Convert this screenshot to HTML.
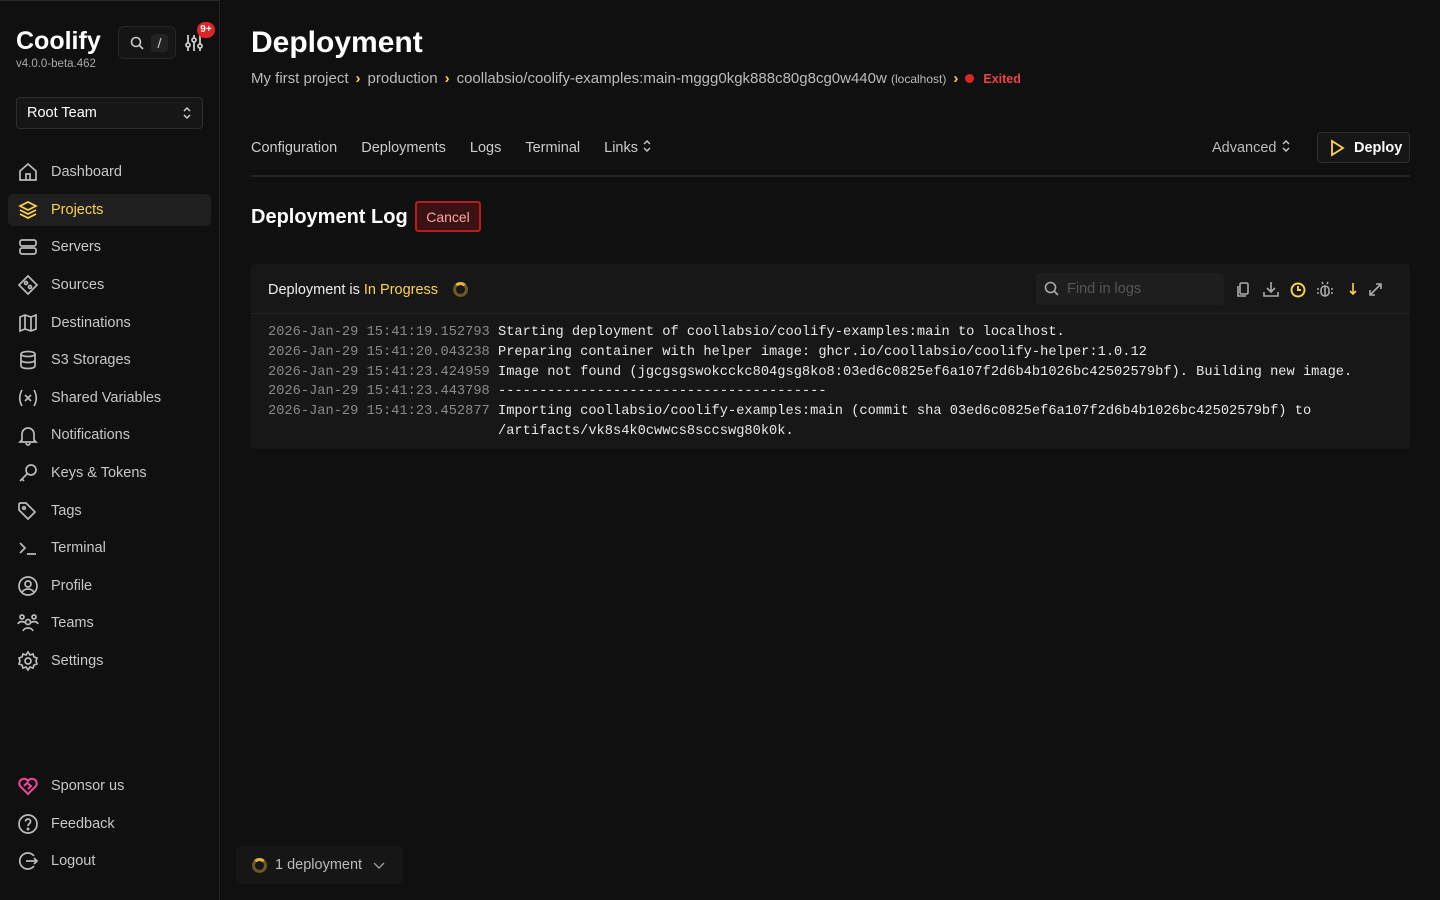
<!DOCTYPE html>
<html><head><meta charset="utf-8"><style>
*{box-sizing:border-box;margin:0;padding:0}
body{width:1440px;height:900px;background:#101010;font-family:"Liberation Sans",sans-serif;color:#ddd;position:relative;overflow:hidden}
.side{position:absolute;left:0;top:0;width:220px;height:900px;border-right:1px solid #242424;border-top:1px solid #2a2a2a}
.logo{position:absolute;left:16px;top:26px;font-size:25px;font-weight:bold;color:#fff}
.ver{position:absolute;left:16px;top:57px;font-size:11.5px;color:#aaa}
.srch{position:absolute;left:118px;top:25px;width:58px;height:33px;border:1px solid #262626;border-radius:6px;background:#151515}
.badge{position:absolute;left:197px;top:21px;width:18px;height:16px;border-radius:8px;background:#dc2626;color:#fff;font-size:10px;font-weight:bold;text-align:center;line-height:16px}
.team{position:absolute;left:16px;top:96px;width:187px;height:32px;border:1px solid #2e2e2e;border-radius:4px;background:#161616;font-size:14.5px;color:#fff;padding:7px 10px}
.nav{position:absolute;left:8px;width:203px;height:32px;border-radius:5px;font-size:14.5px;color:#c8c8c8;padding-left:43px;line-height:33px}
.nav svg{position:absolute;left:9px;top:5px}
.nav.act{background:#1f1f1f;color:#fcd34d}
.main{position:absolute;left:251px;top:0;right:30px}
h1{position:absolute;top:26px;font-size:30px;color:#fff;font-weight:bold}
.bc{position:absolute;top:70px;font-size:15px;color:#bbb;white-space:nowrap}
.bc .ch{color:#fcd34d;margin:0 7px;font-weight:bold}
.tabs{position:absolute;top:140px;font-size:14.5px;color:#ccc}
.tabs span{margin-right:24px}
.hr{position:absolute;left:251px;top:175px;width:1159px;height:2px;background:#222}
.btn{position:absolute;left:1317px;top:132px;width:93px;height:31px;border:1px solid #2e2e2e;border-radius:4px;background:#161616;font-size:14.5px;color:#fff;font-weight:bold;padding:7px 0 0 36px}
.box{position:absolute;left:251px;top:264px;width:1159px;height:185px;background:#171717;border-radius:4px}
.boxh{height:50px;border-bottom:1px solid #232323;position:relative}
.mono{font-family:"Liberation Mono",monospace;font-size:13.7px;line-height:19.8px;color:#e8e8e8;white-space:pre;position:absolute;left:17px;top:59px}
.ts{color:#8a8a8a}
</style></head><body>
<div class="side">
<div class="logo">Coolify</div><div class="ver">v4.0.0-beta.462</div>
<div class="srch"><svg width="58" height="33" style="position:absolute;left:0;top:0"><circle cx="17" cy="15" r="4.5" fill="none" stroke="#ccc" stroke-width="1.6"/><path d="M20.5 18.5l3.5 3.5" stroke="#ccc" stroke-width="1.6"/><rect x="32" y="7" width="17" height="18" rx="3" fill="#222"/><path d="M42 11l-3 10" stroke="#bbb" stroke-width="1.3"/></svg></div>
<svg width="20" height="20" style="position:absolute;left:184px;top:32px" stroke="#ccc" stroke-width="1.8" fill="none"><path d="M4 2v16M10 2v16M16 2v16"/><circle cx="4" cy="12" r="2" fill="#101010"/><circle cx="10" cy="7" r="2" fill="#101010"/><circle cx="16" cy="13" r="2" fill="#101010"/></svg>
<div class="badge">9+</div>
<div class="team">Root Team<svg width="10" height="14" style="position:absolute;right:10px;top:8px" stroke="#ccc" stroke-width="1.5" fill="none"><path d="M2 5l3-3 3 3M2 9l3 3 3-3"/></svg></div>
<div class="nav" style="top:155px"><svg width="22" height="22" fill="none" stroke="#bbb" stroke-width="1.7"><path d="M3 10l8-7 8 7v9H3z M9 19v-6h4v6"/></svg>Dashboard</div>
<div class="nav act" style="top:193px"><svg width="22" height="22" fill="none" stroke="#fcd34d" stroke-width="1.7"><path d="M11 3l8 4-8 4-8-4z M3 11l8 4 8-4 M3 15l8 4 8-4"/></svg>Projects</div>
<div class="nav" style="top:230px"><svg width="22" height="22" fill="none" stroke="#bbb" stroke-width="1.7"><rect x="3" y="4" width="16" height="6" rx="2"/><rect x="3" y="12" width="16" height="6" rx="2"/></svg>Servers</div>
<div class="nav" style="top:268px"><svg width="22" height="22" fill="none" stroke="#bbb" stroke-width="1.7"><path d="M11 2l9 9-9 9-9-9z"/><circle cx="9" cy="9" r="1.5"/><circle cx="13" cy="13" r="1.5"/></svg>Sources</div>
<div class="nav" style="top:306px"><svg width="22" height="22" fill="none" stroke="#bbb" stroke-width="1.7"><path d="M3 5l5-2 6 2 5-2v14l-5 2-6-2-5 2z M8 3v14M14 5v14"/></svg>Destinations</div>
<div class="nav" style="top:343px"><svg width="22" height="22" fill="none" stroke="#bbb" stroke-width="1.7"><ellipse cx="11" cy="5" rx="7" ry="2.5"/><path d="M4 5v12c0 1.4 3 2.5 7 2.5s7-1.1 7-2.5V5M4 11c0 1.4 3 2.5 7 2.5s7-1.1 7-2.5"/></svg>S3 Storages</div>
<div class="nav" style="top:381px"><svg width="22" height="22" fill="none" stroke="#bbb" stroke-width="1.7"><path d="M5 3c-3 5-3 11 0 16M17 3c3 5 3 11 0 16M8 8l6 6M14 8l-6 6"/></svg>Shared Variables</div>
<div class="nav" style="top:418px"><svg width="22" height="22" fill="none" stroke="#bbb" stroke-width="1.7"><path d="M5 16V10a6 6 0 0112 0v6l2 2H3z M9 19a2 2 0 004 0"/></svg>Notifications</div>
<div class="nav" style="top:456px"><svg width="22" height="22" fill="none" stroke="#bbb" stroke-width="1.7"><circle cx="14" cy="8" r="5"/><path d="M10 12l-7 7M5 17l2 2"/></svg>Keys &amp; Tokens</div>
<div class="nav" style="top:494px"><svg width="22" height="22" fill="none" stroke="#bbb" stroke-width="1.7"><path d="M2 4v6l9 9 7-7-9-9H3z"/><circle cx="7" cy="8" r="1.3"/></svg>Tags</div>
<div class="nav" style="top:531px"><svg width="22" height="22" fill="none" stroke="#bbb" stroke-width="1.7"><path d="M3 6l5 5-5 5M10 17h9"/></svg>Terminal</div>
<div class="nav" style="top:569px"><svg width="22" height="22" fill="none" stroke="#bbb" stroke-width="1.7"><circle cx="11" cy="11" r="9"/><circle cx="11" cy="9" r="3"/><path d="M5 17c3-4 9-4 12 0"/></svg>Profile</div>
<div class="nav" style="top:606px"><svg width="22" height="22" fill="none" stroke="#bbb" stroke-width="1.7"><circle cx="11" cy="10" r="2.5"/><circle cx="5" cy="5" r="2"/><circle cx="17" cy="5" r="2"/><path d="M6 19c1-4 9-4 10 0M1 12c1-3 6-3 7-1M21 12c-1-3-6-3-7-1"/></svg>Teams</div>
<div class="nav" style="top:644px"><svg width="22" height="22" fill="none" stroke="#bbb" stroke-width="1.7"><circle cx="11" cy="11" r="3"/><path d="M11 2l2 3 3-1 1 3 3 1-1 3 1 3-3 1-1 3-3-1-2 3-2-3-3 1-1-3-3-1 1-3-1-3 3-1 1-3 3 1z"/></svg>Settings</div>
<div class="nav" style="top:769px"><svg width="22" height="22" fill="none" stroke="#ec4899" stroke-width="2"><path d="M11 19L3 11a4.5 4.5 0 018-5 4.5 4.5 0 018 5z M7 11l3-3 4 3-3 3"/></svg>Sponsor us</div>
<div class="nav" style="top:807px"><svg width="22" height="22" fill="none" stroke="#bbb" stroke-width="1.7"><circle cx="11" cy="11" r="9"/><path d="M8.5 8.5a2.5 2.5 0 114 2c-1 .7-1.5 1.2-1.5 2.5"/><circle cx="11" cy="16" r=".6" fill="#bbb"/></svg>Feedback</div>
<div class="nav" style="top:844px"><svg width="22" height="22" fill="none" stroke="#bbb" stroke-width="1.7"><path d="M17 6a8 8 0 100 10M9 11h11M17 8l3 3-3 3"/></svg>Logout</div>
</div>

<div class="main">
<h1>Deployment</h1>
<div class="bc">My first project<span class="ch">›</span>production<span class="ch">›</span>coollabsio/coolify-examples:main-mggg0kgk888c80g8cg0w440w <span style="font-size:12px">(localhost)</span><span class="ch">›</span><span style="display:inline-block;width:9px;height:9px;border-radius:50%;background:#dc2626;margin-right:9px"></span><span style="color:#ef4444;font-size:12.5px;font-weight:bold">Exited</span></div>
<div class="tabs"><span>Configuration</span><span>Deployments</span><span>Logs</span><span>Terminal</span><span>Links <svg width="10" height="12" stroke="#ccc" stroke-width="1.4" fill="none"><path d="M2 4l3-3 3 3M2 8l3 3 3-3"/></svg></span></div>
<div style="position:absolute;left:961px;top:140px;font-size:14.5px;color:#bbb">Advanced <svg width="10" height="12" stroke="#ccc" stroke-width="1.4" fill="none"><path d="M2 4l3-3 3 3M2 8l3 3 3-3"/></svg></div>
<div style="position:absolute;top:206px;font-size:20px;font-weight:bold;color:#fff">Deployment Log</div>
<div style="position:absolute;left:164px;top:201px;width:66px;height:31px;border:2px solid #b91c1c;border-radius:3px;background:#3b1214;color:#fca5a5;font-size:14px;text-align:center;line-height:28px">Cancel</div>
</div>
<div class="hr"></div>
<div class="btn"><svg width="16" height="18" style="position:absolute;left:11px;top:6px" fill="none" stroke="#fcd34d" stroke-width="1.8"><path d="M3 2l11 7-11 7z"/></svg>Deploy</div>

<div class="box">
<div class="boxh">
<div style="position:absolute;left:17px;top:18px;font-size:14.5px;color:#eee">Deployment is <span style="color:#fcd34d">In Progress</span></div>
<div style="position:absolute;left:202px;top:18px;width:15px;height:15px;border-radius:50%;border:3px solid #6b5a22;border-top-color:#e0b83a"></div>
<div style="position:absolute;left:785px;top:9px;width:188px;height:32px;border-radius:4px;background:#1e1e1e;font-size:14.5px;color:#555;padding:8px 0 0 31px">Find in logs<svg width="16" height="16" style="position:absolute;left:8px;top:8px" fill="none" stroke="#aaa" stroke-width="1.6"><circle cx="6.5" cy="6.5" r="5"/><path d="M10 10l4 4"/></svg></div>
<svg width="160" height="20" style="position:absolute;left:984px;top:16px" fill="none" stroke-width="1.6">
<g stroke="#aaa"><rect x="5" y="3" width="8" height="11" rx="1.5"/><path d="M3 6v10h8"/></g>
<g stroke="#aaa"><path d="M36 2v9M32 8l4 4 4-4M29 12v4h14v-4"/></g>
<g stroke="#fcd34d" stroke-width="1.9"><circle cx="63" cy="10" r="6.5"/><path d="M63 6v4h3"/></g>
<g stroke="#aaa"><rect x="86" y="6" width="8" height="10" rx="4"/><path d="M84 9h-2M96 9h2M84 13h-2M96 13h2M88 4l-1-2M92 4l1-2M90 6v10"/></g>
<g stroke="#fcd34d"><path d="M118 3v11M115 11l3 3 3-3"/></g>
<g stroke="#aaa"><path d="M141 4h5v5M146 4l-11 11M135 10v5h5"/></g>
</svg>
</div>
<div class="mono"><span class="ts">2026-Jan-29 15:41:19.152793</span> Starting deployment of coollabsio/coolify-examples:main to localhost.
<span class="ts">2026-Jan-29 15:41:20.043238</span> Preparing container with helper image: ghcr.io/coollabsio/coolify-helper:1.0.12
<span class="ts">2026-Jan-29 15:41:23.424959</span> Image not found (jgcgsgswokcckc804gsg8ko8:03ed6c0825ef6a107f2d6b4b1026bc42502579bf). Building new image.
<span class="ts">2026-Jan-29 15:41:23.443798</span> ----------------------------------------
<span class="ts">2026-Jan-29 15:41:23.452877</span> Importing coollabsio/coolify-examples:main (commit sha 03ed6c0825ef6a107f2d6b4b1026bc42502579bf) to
                            /artifacts/vk8s4k0cwwcs8sccswg80k0k.</div>
</div>

<div style="position:absolute;left:236px;top:846px;width:167px;height:38px;border-radius:6px;background:#161616;font-size:14.5px;color:#bbb;padding:11px 0 0 39px">1 deployment<svg width="12" height="8" style="position:absolute;left:137px;top:16px" fill="none" stroke="#999" stroke-width="1.4"><path d="M1 1l5 5 5-5"/></svg><div style="position:absolute;left:16px;top:12px;width:15px;height:15px;border-radius:50%;border:3px solid #6b5a22;border-top-color:#e0b83a"></div></div>
</body></html>
